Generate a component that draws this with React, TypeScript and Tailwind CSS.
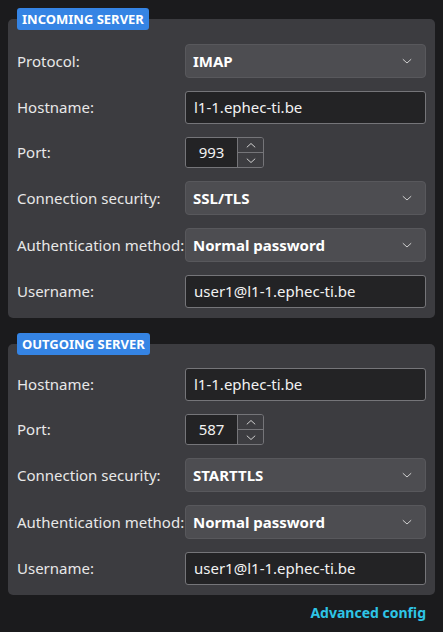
import { ReactNode } from 'react'

const Chevron = () => (
  <svg width="12" height="8" viewBox="0 0 12 8" className="text-[#cfcfcf]">
    <path d="M1.8 2.2 L6 6 L10.2 2.2" fill="none" stroke="currentColor" strokeWidth="1" />
  </svg>
)

const Select = ({ value }: { value: string }) => (
  <div className="flex h-[34px] items-center justify-between rounded-[4px] border border-[#58585c] bg-[#4d4d51] pl-[7px] pr-[12px]">
    <span className="text-[15px] font-[700] text-white">{value}</span>
    <Chevron />
  </div>
)

const Input = ({ value }: { value: string }) => (
  <div className="flex h-[33px] items-center rounded-[3px] border border-[#757579] bg-[#232325] px-[8px]">
    <span className="text-[15px] text-[#f2f2f2]">{value}</span>
  </div>
)

const Spin = ({ value }: { value: string }) => (
  <div className="flex h-[31px] w-[79px] overflow-hidden rounded-[3px] border border-[#757579]">
    <div className="flex w-[51px] items-center justify-center bg-[#232325] text-[15px] text-[#f2f2f2]">{value}</div>
    <div className="flex flex-1 flex-col border-l border-[#757579] bg-[#3d3d41]">
      <div className="flex flex-1 items-center justify-center border-b border-[#757579]">
        <svg width="12" height="7" viewBox="0 0 12 7">
          <path d="M1.8 5.3 L6 1.5 L10.2 5.3" fill="none" stroke="#cfcfcf" strokeWidth="1" />
        </svg>
      </div>
      <div className="flex flex-1 items-center justify-center">
        <svg width="12" height="7" viewBox="0 0 12 7">
          <path d="M1.8 1.7 L6 5.5 L10.2 1.7" fill="none" stroke="#cfcfcf" strokeWidth="1" />
        </svg>
      </div>
    </div>
  </div>
)

const Row = ({ label, children }: { label: string; children: ReactNode }) => (
  <div className="grid grid-cols-[168px_1fr] items-center">
    <span className="text-[15px] text-[#e8e8e8]">{label}</span>
    <div>{children}</div>
  </div>
)

const Section = ({ title, children, top }: { title: string; children: ReactNode; top: string }) => (
  <section className="flex flex-col">
    <span className="relative z-10 -mb-[11px] ml-[9px] self-start rounded-[3px] bg-[#3584e4] px-[5px] py-[2px] text-[13px] leading-[18px] font-[700] text-white">
      {title}
    </span>
    <div className={`flex flex-col gap-[13px] rounded-[5px] bg-[#3c3c40] pb-[10px] pl-[9px] pr-[9px] ${top}`}>
      {children}
    </div>
  </section>
)

export default function App() {
  return (
    <div className="min-h-[632px] bg-[#1b1b1d] px-2 pt-2 font-['Noto_Sans',sans-serif]">
      <Section title="INCOMING SERVER" top="pt-[25px]">
        <Row label="Protocol:"><Select value="IMAP" /></Row>
        <Row label="Hostname:"><Input value="l1-1.ephec-ti.be" /></Row>
        <Row label="Port:"><Spin value="993" /></Row>
        <Row label="Connection security:"><Select value="SSL/TLS" /></Row>
        <Row label="Authentication method:"><Select value="Normal password" /></Row>
        <Row label="Username:"><Input value="user1@l1-1.ephec-ti.be" /></Row>
      </Section>
      <div className="h-[15px]" />
      <Section title="OUTGOING SERVER" top="pt-[24px]">
        <Row label="Hostname:"><Input value="l1-1.ephec-ti.be" /></Row>
        <Row label="Port:"><Spin value="587" /></Row>
        <Row label="Connection security:"><Select value="STARTTLS" /></Row>
        <Row label="Authentication method:"><Select value="Normal password" /></Row>
        <Row label="Username:"><Input value="user1@l1-1.ephec-ti.be" /></Row>
      </Section>
      <div className="flex justify-end pr-[9px] pt-[7px]">
        <span className="text-[14px] font-[700] text-[#2ec5e6]">Advanced config</span>
      </div>
    </div>
  )
}
